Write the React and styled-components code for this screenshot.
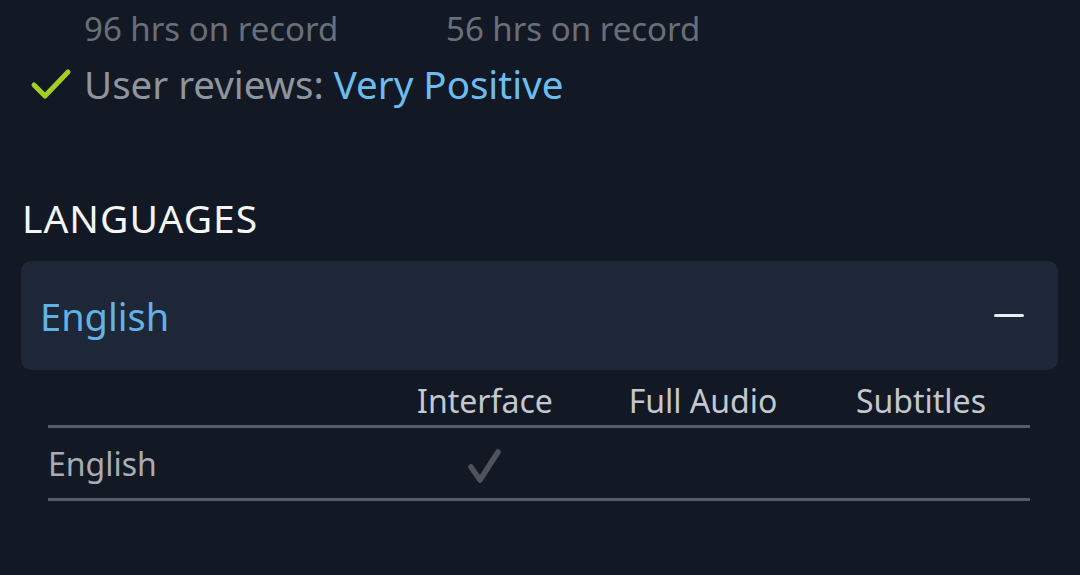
import React from 'react';
import styled, { createGlobalStyle } from 'styled-components';

const GlobalStyle = createGlobalStyle`
  body {
    margin: 0;
    background: #131924;
    font-family: "Noto Sans", "Open Sans", sans-serif;
  }
`;

const Page = styled.div`
  width: 1080px;
  height: 575px;
  box-sizing: border-box;
  padding: 0 22px 0 21px;
  overflow: hidden;
`;

const HoursRow = styled.div`
  display: flex;
  padding-left: 63px;
  margin-top: 5px;
  font-size: 33px;
  line-height: 48px;
  color: #696f78;
`;

const Hours = styled.div`
  width: 362px;
`;

const ReviewRow = styled.div`
  display: flex;
  align-items: center;
  gap: 12px;
  padding-left: 9px;
  margin-top: 5px;
  font-size: 38.5px;
  line-height: 52px;
  color: #8f959c;
`;

const Rating = styled.span`
  color: #6bbdf0;
`;

const SectionTitle = styled.h2`
  margin: 83px 0 0 1px;
  font-size: 39px;
  font-weight: 400;
  line-height: 50px;
  letter-spacing: 1px;
  color: #f4f5f7;
`;

const Panel = styled.div`
  margin-top: 18px;
  height: 109px;
  display: flex;
  align-items: center;
  justify-content: space-between;
  padding: 0 34px 0 19px;
  background: #1d2737;
  border-radius: 10px;
`;

const PanelTitle = styled.span`
  font-size: 38px;
  color: #62b2e6;
`;

const Minus = styled.span`
  width: 30px;
  height: 3px;
  border-radius: 2px;
  background: #e8ecf2;
`;

const Table = styled.div`
  margin: 0 28px 0 27px;
`;

const TableRow = styled.div`
  display: grid;
  grid-template-columns: 328px repeat(3, 1fr);
  align-items: center;
  height: ${(p) => p.h}px;
  border-bottom: 3px solid #565c66;
`;

const HeadCell = styled.div`
  font-size: 32px;
  color: #c4c8ce;
  text-align: center;
  padding-top: 6px;
`;

const RowLabel = styled.div`
  font-size: 32px;
  color: #a8adb4;
`;

const Tick = styled.div`
  display: flex;
  justify-content: center;
  padding-top: 6px;
`;

const GreenCheck = () => (
  <svg width="42" height="32" viewBox="0 0 42 32">
    <path d="M4 17 L15 28 L38 4" fill="none" stroke="#a3cf23" strokeWidth="5" strokeLinecap="round" strokeLinejoin="round" />
  </svg>
);

const GrayCheck = () => (
  <svg width="40" height="38" viewBox="0 0 40 38">
    <path d="M6 20 L15 33 L33 5" fill="none" stroke="#505459" strokeWidth="5.5" strokeLinecap="round" strokeLinejoin="round" />
  </svg>
);

const App = () => (
  <>
    <GlobalStyle />
    <Page>
      <HoursRow>
        <Hours>96 hrs on record</Hours>
        <Hours>56 hrs on record</Hours>
      </HoursRow>
      <ReviewRow>
        <GreenCheck />
        <span>
          User reviews: <Rating>Very Positive</Rating>
        </span>
      </ReviewRow>
      <SectionTitle>LANGUAGES</SectionTitle>
      <Panel>
        <PanelTitle>English</PanelTitle>
        <Minus />
      </Panel>
      <Table>
        <TableRow h={55}>
          <div />
          <HeadCell>Interface</HeadCell>
          <HeadCell>Full Audio</HeadCell>
          <HeadCell>Subtitles</HeadCell>
        </TableRow>
        <TableRow h={70}>
          <RowLabel>English</RowLabel>
          <Tick>
            <GrayCheck />
          </Tick>
          <div />
          <div />
        </TableRow>
      </Table>
    </Page>
  </>
);

export default App;
